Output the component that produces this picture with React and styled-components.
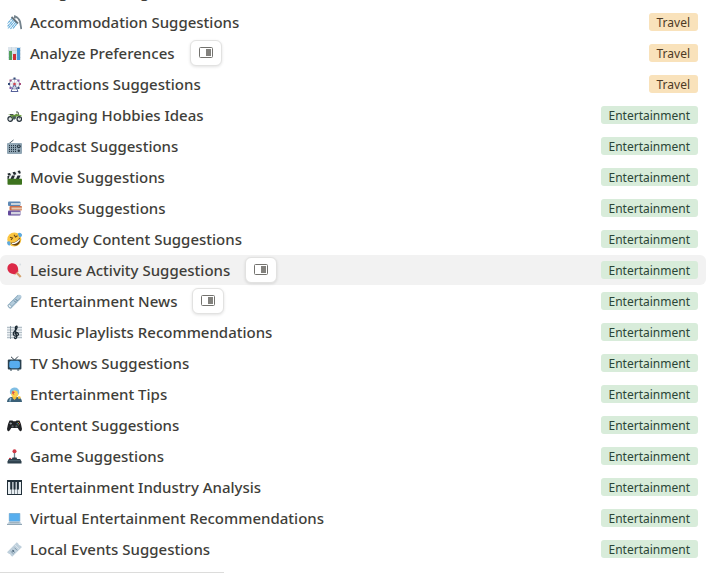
import React from 'react';
import styled, { createGlobalStyle } from 'styled-components';

const ShowerIcon = () => (
  <Icon>
    <path d='M5.5 3 L0.5 8.5 M7 4 L0.5 11.5 M8 5.5 L1 13.5 M9 7 L3.5 13.8 M10 8.5 L6 13.5' stroke='#5fa9d8' strokeWidth='1.1' strokeDasharray='3 0.4' />
    <path d='M4.5 2 L11 8.5' stroke='#66757f' strokeWidth='1.8' />
    <path d='M7.5 3.5 L8 1.2 Q12 3 13 6.5 L14.3 14' stroke='#74838d' strokeWidth='1.8' />
  </Icon>
);

const ChartIcon = () => (
  <Icon>
    <rect x='1' y='1' width='13' height='13' fill='#dde6ed' />
    <path d='M1 4.5H14M1 8H14M1 11.5H14M4.5 1V14M9 1V14' stroke='#c3d0da' strokeWidth='0.6' />
    <rect x='2' y='5' width='3' height='9' fill='#52a05b' />
    <rect x='6' y='8' width='3' height='6' fill='#cf3038' />
    <rect x='10' y='2' width='3' height='12' fill='#4596d8' />
  </Icon>
);

const FerrisIcon = () => (
  <Icon>
    <circle cx='7.5' cy='7' r='5' stroke='#8b95ae' strokeWidth='1' />
    <path d='M7.5 2V12M2.5 7H12.5M4 3.5L11 10.5M11 3.5L4 10.5' stroke='#b5bdd0' strokeWidth='0.7' />
    <path d='M7.5 7L4 14.5H11Z' stroke='#55609a' strokeWidth='1' />
    <path d='M6.5 0.5H8.5V2.5H6.5ZM1 6H3V8H1ZM10.5 10H12.5V12H10.5Z' fill='#344a78' />
    <path d='M2.5 2.5H4.5V4.5H2.5ZM12 6H14V8H12Z' fill='#a8507e' />
    <path d='M10.5 2.5H12.5V4.5H10.5ZM2.5 10H4.5V12H2.5Z' fill='#8a59aa' />
    <circle cx='7.5' cy='7' r='1.3' fill='#d2434e' />
  </Icon>
);

const MotorcycleIcon = () => (
  <Icon>
    <circle cx='3.2' cy='11' r='2.3' fill='#dce0e3' stroke='#25313a' strokeWidth='1.2' />
    <circle cx='12.3' cy='11' r='2.3' fill='#dce0e3' stroke='#25313a' strokeWidth='1.2' />
    <path d='M1 6 L4.5 7 H7 L10 5.5 L12 8 L9.5 8.5 L8.5 11 H5.5 L4.5 8.5Z' fill='#65953b' />
    <path d='M5.5 8.5H9L8 11.5H6Z' fill='#475761' />
    <path d='M9 4H11L12.5 10.5M3 6.5H6.5' stroke='#36433b' strokeWidth='0.9' />
    <path d='M11 7L14.5 7.8' stroke='#78ad48' strokeWidth='1.2' />
  </Icon>
);

const RadioIcon = () => (
  <Icon>
    <path d='M1.5 5 L6.5 1' stroke='#50616d' strokeWidth='1' />
    <rect x='0' y='4' width='15' height='11' rx='1' fill='#91a6b4' />
    <path d='M2.5 6V13M4.5 6V13M6.5 6V13M8.5 6V13' stroke='#263845' strokeWidth='1' strokeDasharray='1.2 0.8' />
    <circle cx='11.8' cy='7.3' r='1.9' fill='#2b3d49' />
    <circle cx='11.8' cy='7.3' r='0.7' fill='#b5c2ca' />
    <circle cx='11.8' cy='11.7' r='1.2' fill='#2b3d49' />
  </Icon>
);

const ClapperIcon = () => (
  <Icon>
    <path d='M0.5 3.5 L13 0.5 L13.8 3.2 L1.3 6.3Z' fill='#eef1f2' />
    <path d='M0.5 3.5 L3 2.9 L4.2 5.5 L1.3 6.3ZM5.5 2.3L8 1.7L9.4 4.3L6.9 4.9ZM10.5 1.1L13 0.5L13.8 3.2L12 3.7Z' fill='#232b30' />
    <rect x='0.5' y='5.5' width='14' height='3.5' fill='#eef1f2' />
    <path d='M0.5 6H2.5L1.5 9H0.5ZM5 5.5H8L6.5 9H3.5ZM10.5 5.5H13.5L12 9H9Z' fill='#232b30' />
    <rect x='0.5' y='8.7' width='14.5' height='6' rx='0.7' fill='#3d731e' />
  </Icon>
);

const BooksIcon = () => (
  <Icon>
    <rect x='1' y='0.5' width='12.5' height='4.5' rx='1' fill='#5d88b4' />
    <rect x='4' y='2' width='9.5' height='2' fill='#c9d4dc' />
    <rect x='2.5' y='5' width='12.5' height='4.5' rx='1' fill='#cc6e49' />
    <rect x='4.5' y='6.5' width='10.5' height='2' fill='#e6c9ae' />
    <rect x='1' y='9.5' width='12.5' height='5' rx='1' fill='#634b9c' />
    <rect x='4' y='10.8' width='9.5' height='2.6' fill='#d3d2df' />
  </Icon>
);

const LaughIcon = () => (
  <Icon>
    <circle cx='7.3' cy='7.5' r='7' fill='#fbc540' />
    <path d='M3.5 10.8 Q10 10.8 12.5 5.5 Q14.5 10 10.5 13 Q6.5 14.8 3.5 10.8Z' fill='#634013' />
    <path d='M4.5 11.1 Q10 10.5 12.3 6.7 L12.8 8.2 Q10 12 5.6 12.2Z' fill='#fff' />
    <path d='M3 5.2 L5.5 6 L4 8M7 2.7 L8.5 5 L10.5 3.8' stroke='#6b4817' strokeWidth='1.1' />
    <path d='M0 10.5 Q0.5 8.8 3 9.5 Q4.3 12.5 2.8 13.5 Q0.5 14 0 10.5ZM10.7 1.5 Q13.5 -0.5 15 2.5 Q15.3 5.5 12.3 5.3Z' fill='#60aadd' />
  </Icon>
);

const PaddleIcon = () => (
  <Icon>
    <path d='M9 9 L13.7 14' stroke='#d3a06d' strokeWidth='2.2' />
    <path d='M1.5 2 C4 -0.8 8.5 0 10.2 3 C11.8 6 11 8 11 9 L8.8 11.3 C6.5 11 3.5 11.3 1.5 8.5 C0 6.5 0 3.8 1.5 2Z' fill='#dc2947' />
    <path d='M7.8 11.8 L11.8 8' stroke='#e8bd91' strokeWidth='1' />
    <circle cx='13.2' cy='1.5' r='0.9' fill='#d7dee2' />
  </Icon>
);

const NewspaperIcon = () => (
  <Icon>
    <path d='M0.5 11 L10.5 1 Q13 0 14.5 2 Q14.8 4 13.5 5.2 L4 14.7 Q1 14.7 0.5 11Z' fill='#b4ccdc' />
    <path d='M2.6 9.6L11 1.4M4.8 12.5L13.4 4' stroke='#86a6ba' strokeWidth='0.9' />
    <path d='M7 6.5L9 8.5M8.5 5L10.5 7' stroke='#5d7b90' strokeWidth='1' />
    <ellipse cx='2.8' cy='12.2' rx='1.4' ry='2' transform='rotate(-45 2.8 12.2)' fill='#e7f0f5' stroke='#7897ac' strokeWidth='0.7' />
  </Icon>
);

const ScoreIcon = () => (
  <Icon>
    <rect x='0' y='1' width='15' height='13' fill='#e9eef1' />
    <path d='M0 2.5H15M0 5H15M0 7.5H15M0 10H15M0 12.5H15' stroke='#9daab4' strokeWidth='0.7' />
    <path d='M3.5 1V14' stroke='#768591' strokeWidth='0.8' />
    <path d='M9.7 12.6 Q8 14.7 7.2 12.3 M9.7 12.6 L8.3 3.2 Q8.7 0.5 10 1.2 Q10.6 3.5 7.8 6 Q5 8.5 7.2 10.7 Q10.5 12 11.5 9.6 Q11.3 7.2 9 7.3 Q7.3 8 8.4 9.5' stroke='#17242e' strokeWidth='1.2' />
  </Icon>
);

const TvIcon = () => (
  <Icon>
    <path d='M4 0.8 L7.5 4 L11 0.5' stroke='#2c3b46' strokeWidth='1' />
    <rect x='0.8' y='3.5' width='13.6' height='10' rx='1' fill='#29404f' />
    <rect x='2.3' y='4.7' width='10.6' height='7.6' rx='2' fill='#57acee' />
    <path d='M3 13.5H5V14.5H3ZM10.2 13.5H12.2V14.5H10.2Z' fill='#29404f' />
  </Icon>
);

const SingerIcon = () => (
  <Icon>
    <path d='M0 15 Q0 10.5 5.5 9.8 H9.5 Q14.7 10 15 15Z' fill='#3a6078' />
    <path d='M5.5 9 H9.5 V11 L7.5 13 L5.5 11Z' fill='#f2bd35' />
    <circle cx='7.8' cy='6' r='3.9' fill='#fbd04d' />
    <path d='M3 6.5 Q2 1.5 7 0.5 Q12.5 0.3 12.3 6 L11 7.8 L10.5 4.5 L7.5 3.2 L5 4.5 L4.3 7.5Z' fill='#80bee4' />
    <path d='M5.5 3.8L8 5.5L6.5 6.2L7.5 8.3L5.2 6.4Z' fill='#d84348' />
    <path d='M3.8 11L2.8 14.5' stroke='#8cb5ce' strokeWidth='1.5' />
    <circle cx='12.2' cy='10.6' r='1.4' fill='#f2bd35' />
  </Icon>
);

const GamepadIcon = () => (
  <Icon>
    <path d='M2.5 2.5 H5.5 L6.3 3.3 H8.7 L9.5 2.5 H12.5 Q14.5 6 15 11 Q14.7 13.5 13.2 13.2 Q12 12.5 10.8 10 H4.2 Q3 12.5 1.8 13.2 Q0.3 13.5 0 11 Q0.5 6 2.5 2.5Z' fill='#202225' />
    <path d='M2.5 5.5H5M3.75 4.3V6.7' stroke='#9aa1a6' strokeWidth='0.8' />
    <circle cx='5.6' cy='8.4' r='1.1' fill='#5b6165' />
    <circle cx='9.4' cy='8.4' r='1.1' fill='#5b6165' />
    <circle cx='11.3' cy='4.5' r='0.6' fill='#d5c44c' />
    <circle cx='12.6' cy='5.7' r='0.6' fill='#cf4d50' />
    <circle cx='10.2' cy='5.7' r='0.6' fill='#5795c7' />
    <circle cx='11.3' cy='6.8' r='0.6' fill='#6da65a' />
  </Icon>
);

const JoystickIcon = () => (
  <Icon>
    <path d='M7.5 3V10' stroke='#708693' strokeWidth='1.3' />
    <circle cx='7.5' cy='2.2' r='2' fill='#cf3947' />
    <path d='M5.5 8.5H9.5L10.3 10.5H4.7Z' fill='#2a3d49' />
    <path d='M1.8 10H13.2L14.5 12.5V14.5H0.5V12.5Z' fill='#2d3f4b' />
    <path d='M2 11.7H13' stroke='#5d7481' strokeWidth='0.7' />
    <rect x='2' y='8.9' width='2.2' height='1.1' fill='#cf3947' />
  </Icon>
);

const PianoIcon = () => (
  <Icon>
    <rect x='0' y='0' width='15' height='15' fill='#22303a' />
    <path d='M1 2H4V14H1ZM4.5 2H7.3V14H4.5ZM7.8 2H10.5V14H7.8ZM11 2H14V14H11Z' fill='#e8eef2' />
    <path d='M3.2 1H5.3V9.5H3.2ZM6.5 1H8.6V9.5H6.5ZM9.8 1H11.9V9.5H9.8Z' fill='#22303a' />
  </Icon>
);

const LaptopIcon = () => (
  <Icon>
    <rect x='1.8' y='2' width='11.5' height='8.8' rx='0.7' fill='#8fb4cf' />
    <rect x='2.4' y='2.6' width='10.3' height='7.6' fill='#57aeee' />
    <path d='M1.8 10.8H13.3L15 13.2H0Z' fill='#c5d3dd' />
    <path d='M2.5 11.7H12.5' stroke='#8298a7' strokeWidth='0.7' />
    <rect x='0' y='13' width='15' height='1' fill='#91a7b6' />
  </Icon>
);

const TicketIcon = () => (
  <Icon>
    <path d='M0 10.2 L9.8 0.3 L11.4 1.8 Q11.6 3.4 13.2 3.5 L15 5 L5.2 14.8 L3.7 13.3 Q3.6 11.8 1.8 11.7Z' fill='#bfd0dc' />
    <path d='M3.7 9.2L6.7 12M5.1 7.9L8 10.7M7.5 5.7L10.2 8.4' stroke='#7791a4' strokeWidth='0.9' />
    <path d='M8.5 3.5L11.7 6.7' stroke='#fff' strokeWidth='0.8' strokeDasharray='1 0.6' />
    <circle cx='6.2' cy='9' r='1' fill='#526c7f' />
  </Icon>
);

const PeekIcon = () => (
  <PeekSvg viewBox='0 0 14 12' aria-hidden='true'>
    <rect x='0.5' y='0.5' width='13' height='10' rx='1' fill='none' stroke='#73726e' />
    <rect x='7' y='2' width='5' height='7' fill='#82817d' />
  </PeekSvg>
);

const PAGES = [
  { name: 'Accommodation Suggestions', tag: 'Travel', icon: <ShowerIcon /> },
  { name: 'Analyze Preferences', tag: 'Travel', icon: <ChartIcon />, peek: true },
  { name: 'Attractions Suggestions', tag: 'Travel', icon: <FerrisIcon /> },
  { name: 'Engaging Hobbies Ideas', tag: 'Entertainment', icon: <MotorcycleIcon /> },
  { name: 'Podcast Suggestions', tag: 'Entertainment', icon: <RadioIcon /> },
  { name: 'Movie Suggestions', tag: 'Entertainment', icon: <ClapperIcon /> },
  { name: 'Books Suggestions', tag: 'Entertainment', icon: <BooksIcon /> },
  { name: 'Comedy Content Suggestions', tag: 'Entertainment', icon: <LaughIcon /> },
  { name: 'Leisure Activity Suggestions', tag: 'Entertainment', icon: <PaddleIcon />, peek: true, active: true },
  { name: 'Entertainment News', tag: 'Entertainment', icon: <NewspaperIcon />, peek: true },
  { name: 'Music Playlists Recommendations', tag: 'Entertainment', icon: <ScoreIcon /> },
  { name: 'TV Shows Suggestions', tag: 'Entertainment', icon: <TvIcon /> },
  { name: 'Entertainment Tips', tag: 'Entertainment', icon: <SingerIcon /> },
  { name: 'Content Suggestions', tag: 'Entertainment', icon: <GamepadIcon /> },
  { name: 'Game Suggestions', tag: 'Entertainment', icon: <JoystickIcon /> },
  { name: 'Entertainment Industry Analysis', tag: 'Entertainment', icon: <PianoIcon /> },
  { name: 'Virtual Entertainment Recommendations', tag: 'Entertainment', icon: <LaptopIcon /> },
  { name: 'Local Events Suggestions', tag: 'Entertainment', icon: <TicketIcon /> },
];

const PageRow = ({ page }) => (
  <Row $active={page.active}>
    {page.icon}
    <PageLink href='#'>{page.name}</PageLink>
    {page.peek && (
      <PeekButton type='button' aria-label={`Open ${page.name} in side peek`}>
        <PeekIcon />
      </PeekButton>
    )}
    <Tag $travel={page.tag === 'Travel'}>{page.tag}</Tag>
  </Row>
);

const App = () => (
  <main>
    <GlobalStyle />
    <ScrolledRow>
      <PageLink href='#'>Budget Planning</PageLink>
    </ScrolledRow>
    <List>
      {PAGES.map(page => <PageRow key={page.name} page={page} />)}
    </List>
    <Divider />
  </main>
);

export default App;

const GlobalStyle = createGlobalStyle`
  * {
    box-sizing: border-box;
  }

  body {
    margin: 0;
    background: #fff;
    color: #403e39;
    font-family: 'Noto Sans', sans-serif;
  }
`;

// the row above the list, only its descenders are still in view
const ScrolledRow = styled.div`
  display: flex;
  align-items: flex-end;
  height: 7px;
  padding: 0 8px 5px 30px;
  overflow: hidden;
`;

const List = styled.ul`
  display: flex;
  flex-direction: column;
  gap: 1px;
  margin: 0;
  padding: 0;
  list-style: none;
`;

const Row = styled.li`
  display: flex;
  align-items: center;
  height: 30px;
  padding: 0 8px 0 7px;
  border-radius: 6px;
  background: ${props => props.$active ? '#f2f2f2' : 'transparent'};
`;

const Icon = styled.svg.attrs({ viewBox: '0 0 15 15', fill: 'none', 'aria-hidden': true })`
  flex: none;
  width: 15px;
  height: 15px;
  margin-right: 8px;
`;

const PageLink = styled.a`
  color: inherit;
  font-size: 15px;
  font-weight: 500;
  line-height: 20px;
  text-decoration: none;
  white-space: nowrap;
`;

const PeekButton = styled.button`
  display: flex;
  align-items: center;
  justify-content: center;
  width: 32px;
  height: 26px;
  margin-left: 15px;
  padding: 0;
  border: 1px solid #e2e2e1;
  border-radius: 6px;
  background: #fff;
  box-shadow: 0 1px 3px rgba(15, 15, 15, 0.12);
`;

const PeekSvg = styled.svg`
  width: 14px;
  height: 12px;
`;

const Tag = styled.span`
  margin-left: auto;
  padding: 1px 8px 0;
  border-radius: 3px;
  background: ${props => props.$travel ? '#f9e2bb' : '#d8ecda'};
  color: ${props => props.$travel ? '#4d3a25' : '#2b4637'};
  font-size: 12px;
  line-height: 17px;
`;

const Divider = styled.hr`
  width: 224px;
  margin: 8px 0 0;
  border: 0;
  border-top: 1px solid #dcdcdb;
`;
